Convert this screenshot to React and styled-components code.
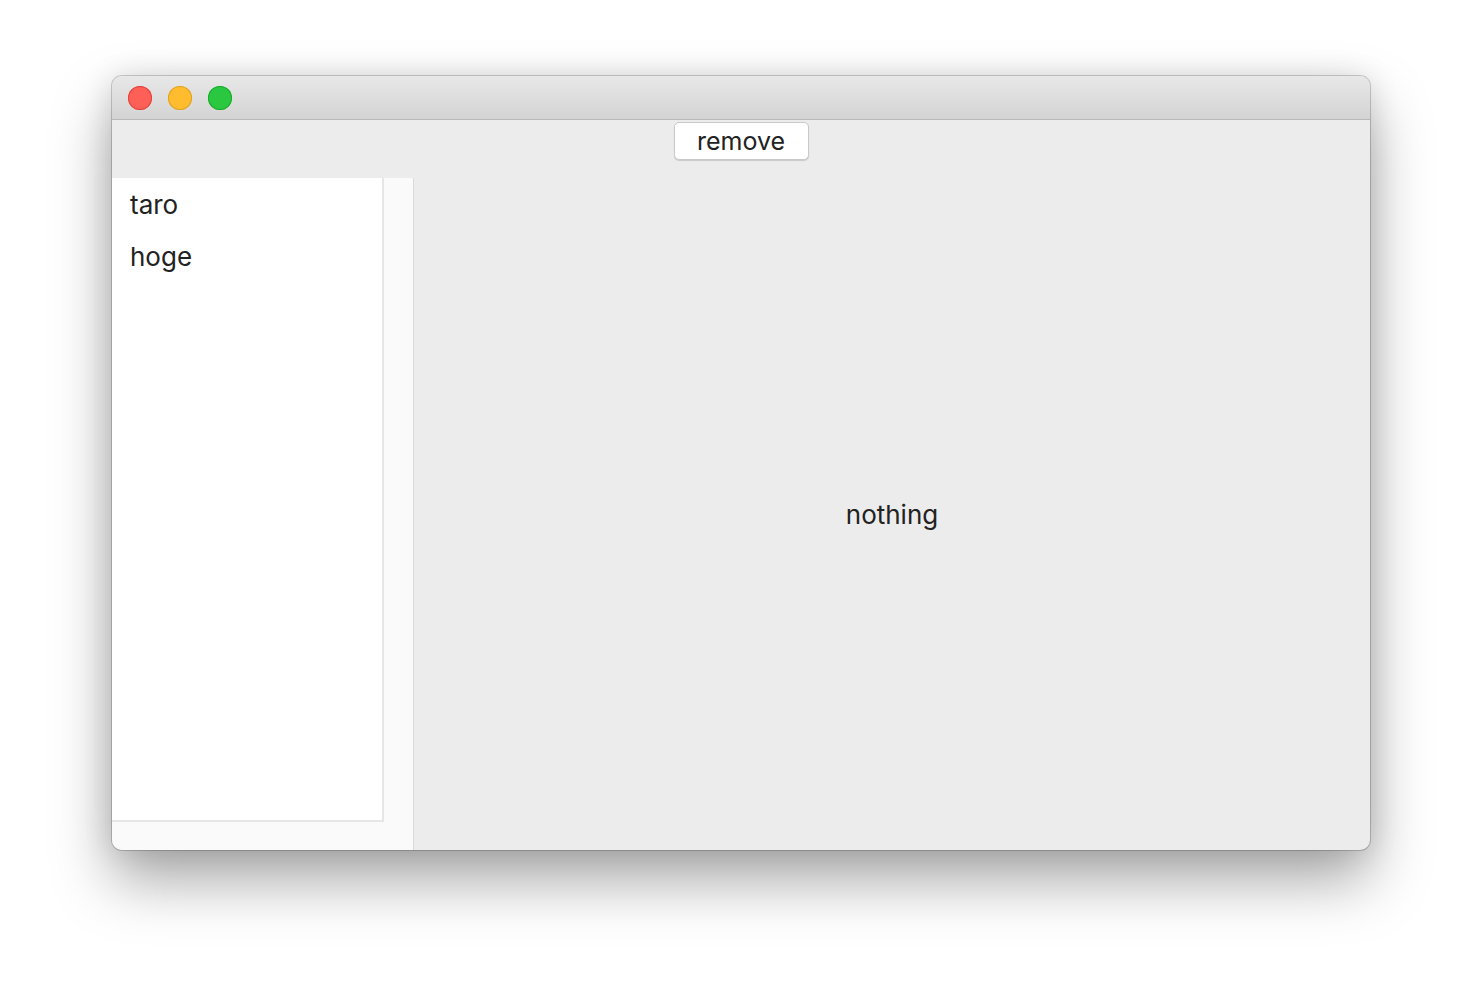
import React from "react";
import styled, { createGlobalStyle } from "styled-components";

const GlobalStyle = createGlobalStyle`
  html, body {
    margin: 0;
    padding: 0;
    background: #ffffff;
    font-family: "Inter", "Liberation Sans", sans-serif;
  }
`;

const people = ["taro", "hoge"];

export default function App() {
  return (
    <Page>
      <GlobalStyle />
      <Window>
        <TitleBar>
          <Light color="#fe5f57" edge="#e0443e" />
          <Light color="#febc2e" edge="#dea123" />
          <Light color="#2ac840" edge="#1aab29" />
        </TitleBar>
        <Toolbar>
          <Button>remove</Button>
        </Toolbar>
        <Body>
          <Sidebar>
            <ListArea>
              <List>
                {people.map((p) => (
                  <Item key={p}>{p}</Item>
                ))}
              </List>
              <Gutter />
            </ListArea>
            <BottomStrip />
          </Sidebar>
          <Detail>nothing</Detail>
        </Body>
      </Window>
    </Page>
  );
}

const Page = styled.div`
  width: 1482px;
  height: 998px;
  padding: 76px 0 0 112px;
  box-sizing: border-box;
  overflow: hidden;
`;

const Window = styled.div`
  width: 1258px;
  height: 774px;
  border-radius: 10px;
  overflow: hidden;
  background: #ececec;
  display: flex;
  flex-direction: column;
  box-shadow: 0 0 0 1px rgba(0, 0, 0, 0.18), 0 30px 60px rgba(0, 0, 0, 0.35),
    0 0 30px rgba(0, 0, 0, 0.12);
`;

const TitleBar = styled.div`
  height: 44px;
  flex: none;
  display: flex;
  align-items: center;
  gap: 16px;
  padding-left: 16px;
  background: linear-gradient(#e8e8e8, #d3d3d3);
  border-bottom: 1px solid #b9b9b9;
  box-sizing: border-box;
`;

const Light = styled.span`
  width: 24px;
  height: 24px;
  border-radius: 50%;
  background: ${(p) => p.color};
  box-shadow: inset 0 0 0 1px ${(p) => p.edge};
`;

const Toolbar = styled.div`
  height: 58px;
  flex: none;
  display: flex;
  justify-content: center;
  padding-top: 2px;
  box-sizing: border-box;
`;

const Button = styled.button`
  width: 135px;
  height: 38px;
  background: #ffffff;
  border: 1px solid #c9c9c9;
  border-radius: 5px;
  box-shadow: 0 1px 1px rgba(0, 0, 0, 0.15);
  font-family: inherit;
  font-size: 25px;
  color: #222;
  padding: 0;
`;

const Body = styled.div`
  flex: 1;
  display: flex;
  min-height: 0;
`;

const Sidebar = styled.div`
  width: 301px;
  flex: none;
  display: flex;
  flex-direction: column;
  background: #fafafa;
  border-right: 1px solid #dadada;
`;

const ListArea = styled.div`
  flex: 1;
  display: flex;
`;

const List = styled.div`
  width: 272px;
  background: #ffffff;
  border-right: 2px solid #e6e6e6;
  border-bottom: 2px solid #e6e6e6;
  padding-top: 10px;
  box-sizing: border-box;
`;

const Gutter = styled.div`
  flex: 1;
`;

const BottomStrip = styled.div`
  height: 28px;
  flex: none;
`;

const Item = styled.div`
  height: 52px;
  line-height: 34px;
  padding-left: 18px;
  font-size: 26px;
  color: #222;
`;

const Detail = styled.div`
  flex: 1;
  display: flex;
  align-items: center;
  justify-content: center;
  font-size: 26px;
  color: #222;
`;
